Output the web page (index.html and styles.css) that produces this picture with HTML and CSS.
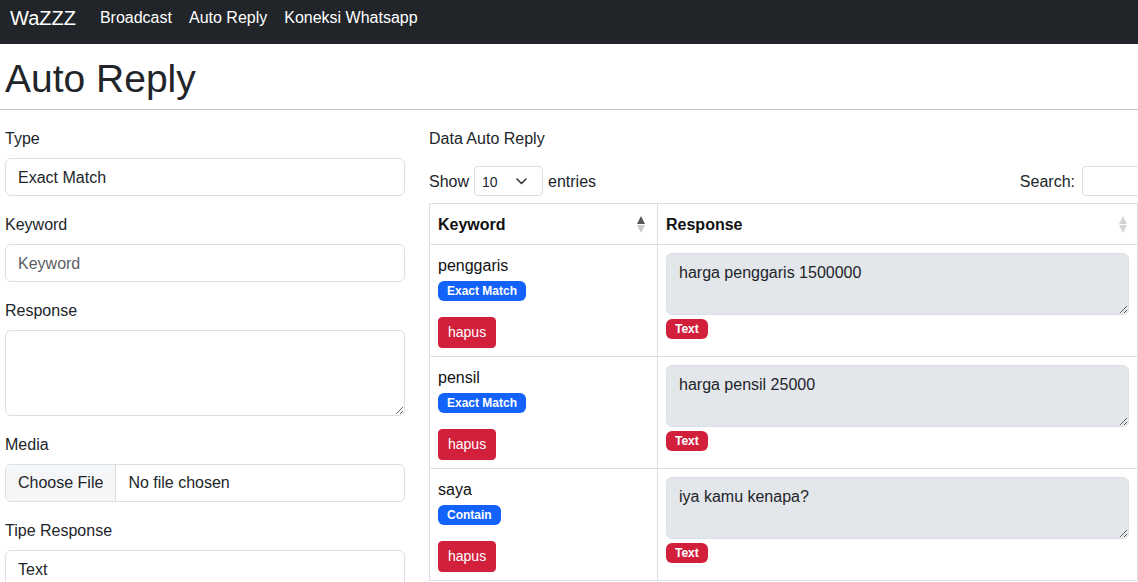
FILE: index.html
```html
<!DOCTYPE html>
<html lang="id">
<head>
<meta charset="utf-8">
<title>Auto Reply - WaZZZ</title>
<link rel="stylesheet" href="styles.css">
</head>
<body>
<nav class="navbar">
  <a class="brand" href="#">WaZZZ</a>
  <ul class="nav">
    <li><a class="nav-link" href="#">Broadcast</a></li>
    <li><a class="nav-link" href="#">Auto Reply</a></li>
    <li><a class="nav-link" href="#">Koneksi Whatsapp</a></li>
  </ul>
</nav>

<h1 class="page-title">Auto Reply</h1>
<hr class="divider">

<main class="content">
  <form class="form-col">
    <div class="field">
      <label class="label" for="type">Type</label>
      <select class="control" id="type"><option>Exact Match</option><option>Contain</option></select>
    </div>
    <div class="field">
      <label class="label" for="keyword">Keyword</label>
      <input class="control" id="keyword" type="text" placeholder="Keyword">
    </div>
    <div class="field">
      <label class="label" for="response">Response</label>
      <textarea class="control area" id="response" rows="3"></textarea>
    </div>
    <div class="field">
      <label class="label" for="media">Media</label>
      <input class="control file" id="media" type="file">
    </div>
    <div class="field">
      <label class="label" for="tipe">Tipe Response</label>
      <select class="control" id="tipe"><option>Text</option><option>Image</option></select>
    </div>
    <button class="btn-primary" type="button">Simpan</button>
  </form>

  <section class="data-col">
    <div class="data-wrap">
      <div class="label data-title">Data Auto Reply</div>
      <div class="dt-top">
        <div class="dt-length">
          <span>Show</span>
          <div class="mini-select"><span>10</span>
            <svg width="11" height="7" viewBox="0 0 11 7"><path d="M1 1l4.5 4.5L10 1" fill="none" stroke="#343a40" stroke-width="1.6" stroke-linecap="round" stroke-linejoin="round"/></svg>
          </div>
          <span>entries</span>
        </div>
        <div class="dt-filter">
          <span>Search:</span>
          <input class="mini-input" type="search">
        </div>
      </div>

      <table class="data-table">
        <colgroup><col class="c-key"><col class="c-resp"><col class="c-media"></colgroup>
        <thead>
          <tr>
            <th><div class="th-inner"><span>Keyword</span>
              <svg class="sort" width="8" height="17" viewBox="0 0 8 17"><polygon points="4,0 8,8 0,8" fill="#575757"/><polygon points="0,9 8,9 4,17" fill="#c9c9c9"/></svg></div></th>
            <th><div class="th-inner"><span>Response</span>
              <svg class="sort sort-r" width="8" height="17" viewBox="0 0 8 17"><polygon points="4,0 8,8 0,8" fill="#d4d4d4"/><polygon points="0,9 8,9 4,17" fill="#d4d4d4"/></svg></div></th>
            <th></th>
          </tr>
        </thead>
        <tbody>
          <tr>
            <td><div class="key-cell"><span>penggaris</span><span class="badge blue">Exact Match</span><button class="btn-danger" type="button">hapus</button></div></td>
            <td><textarea class="resp-area" rows="2" readonly>harga penggaris 1500000</textarea><span class="badge red">Text</span></td>
            <td></td>
          </tr>
          <tr>
            <td><div class="key-cell"><span>pensil</span><span class="badge blue">Exact Match</span><button class="btn-danger" type="button">hapus</button></div></td>
            <td><textarea class="resp-area" rows="2" readonly>harga pensil 25000</textarea><span class="badge red">Text</span></td>
            <td></td>
          </tr>
          <tr>
            <td><div class="key-cell"><span>saya</span><span class="badge blue">Contain</span><button class="btn-danger" type="button">hapus</button></div></td>
            <td><textarea class="resp-area" rows="2" readonly>iya kamu kenapa?</textarea><span class="badge red">Text</span></td>
            <td></td>
          </tr>
        </tbody>
      </table>
    </div>
  </section>
</main>
</body>
</html>
```

FILE: styles.css
```css
html {
  scrollbar-width: none;
}

* {
  box-sizing: border-box;
}

body {
  margin: 0;
  font-family: "Liberation Sans", Arial, Helvetica, sans-serif;
  font-size: 16px;
  line-height: 24px;
  color: #212529;
  background: #fff;
}

/* navbar */
.navbar {
  height: 44px;
  background: #212529;
  display: flex;
  align-items: center;
  padding: 1px 0 9px 10px;
}

.brand {
  color: #fff;
  text-decoration: none;
  font-size: 20px;
  line-height: 30px;
  margin-right: 15px;
}

.nav {
  list-style: none;
  margin: 0;
  padding: 0;
  display: flex;
}

.nav-link {
  display: block;
  padding: 0 8px 0 9px;
  color: #fff;
  text-decoration: none;
  font-size: 16px;
  line-height: 24px;
}

/* heading */
.page-title {
  margin: 10px 0 7px;
  padding: 1px 0 0 5px;
  height: 48px;
  font-size: 39px;
  line-height: 48px;
  font-weight: 500;
  color: #212529;
}

.divider {
  margin: 0 0 16px;
  border: 0;
  border-top: 1px solid #c3c4c6;
}

/* main layout */
.content {
  display: flex;
  gap: 24px;
  padding-left: 5px;
  align-items: flex-start;
}

.form-col {
  width: 400px;
  flex: none;
}

.field {
  margin-bottom: 16px;
}

.label {
  display: block;
  margin-bottom: 8px;
  padding-top: 1px;
  height: 24px;
  line-height: 24px;
}

.control {
  display: block;
  width: 100%;
  height: 38px;
  padding: 7px 12px 5px;
  font-family: inherit;
  font-size: 16px;
  line-height: 24px;
  color: #212529;
  background: #fff;
  border: 1px solid #dbdfe4;
  border-radius: 6px;
  appearance: none;
  -webkit-appearance: none;
  outline: none;
}

.control::placeholder {
  color: #5c6064;
}

.area {
  height: 86px;
  resize: vertical;
}

.file {
  overflow: hidden;
  padding: 6px 12px;
}

.file::file-selector-button {
  font-family: inherit;
  font-size: 16px;
  line-height: 24px;
  color: #212529;
  padding: 6px 12px;
  margin: -6px 12px -6px -12px;
  border: 0;
  border-right: 1px solid #dbdfe4;
  border-radius: 0;
  background: #f5f6f8;
}

.btn-primary {
  font-family: inherit;
  font-size: 16px;
  line-height: 24px;
  padding: 6px 12px;
  color: #fff;
  background: #1262fb;
  border: 1px solid #1262fb;
  border-radius: 6px;
}

/* data column */
.data-col {
  flex: 1;
  min-width: 0;
  overflow: hidden;
}

.data-wrap {
  width: 823px;
}

.data-title {
  margin-bottom: 16px;
}

.dt-top {
  display: flex;
  justify-content: space-between;
  align-items: center;
  height: 30px;
  padding-top: 1px;
}

.dt-length,
.dt-filter {
  display: flex;
  align-items: center;
}

.dt-length {
  gap: 5px;
}

.dt-filter {
  gap: 7px;
}

.mini-select {
  width: 69px;
  height: 30px;
  margin-top: -1px;
  display: flex;
  align-items: center;
  justify-content: space-between;
  padding: 1px 15px 0 7px;
  border: 1px solid #dbdfe4;
  border-radius: 4px;
  font-size: 14px;
}

.mini-input {
  width: 170px;
  height: 30px;
  margin-top: -1px;
  border: 1px solid #dbdfe4;
  border-radius: 4px;
  font-family: inherit;
  font-size: 14px;
  padding: 4px 8px;
  outline: none;
}

/* table */
.data-table {
  width: 100%;
  margin-top: 7px;
  border-collapse: collapse;
  table-layout: fixed;
}

.c-key {
  width: 228px;
}

.c-resp {
  width: 480px;
}

.data-table th,
.data-table td {
  border: 1px solid #dbdfe4;
  padding: 8px;
  text-align: left;
  vertical-align: top;
  color: #212529;
}

.data-table th {
  font-weight: 700;
  color: #111;
  padding: 9px 8px 7px;
}

.th-inner {
  display: flex;
  justify-content: space-between;
  align-items: center;
  height: 24px;
}

.sort {
  margin-right: 4px;
  margin-top: -2px;
  flex: none;
}

.sort-r {
  margin-right: 2px;
}

.key-cell {
  display: flex;
  flex-direction: column;
  align-items: flex-start;
  color: #111;
  padding-top: 1px;
}

.key-cell > span:first-child {
  height: 23px;
}

.badge {
  display: inline-block;
  font-size: 12px;
  font-weight: 700;
  line-height: 12px;
  padding: 4px 9px;
  border-radius: 6px;
  color: #fff;
}

.key-cell .badge {
  margin-top: 4px;
}

.blue {
  background: #1262fb;
}

.red {
  background: #d21f3c;
  margin-top: 4px;
}

.btn-danger {
  margin-top: 16px;
  height: 31px;
  padding: 4px 9px;
  font-family: inherit;
  font-size: 14px;
  line-height: 21px;
  color: #fff;
  background: #d21f3c;
  border: 1px solid #d21f3c;
  border-radius: 4px;
}

.resp-area {
  display: block;
  width: 100%;
  height: 62px;
  padding: 7px 12px 5px;
  font-family: inherit;
  font-size: 16px;
  line-height: 24px;
  color: #212529;
  background: #e3e6ea;
  border: 1px solid #dbdfe4;
  border-radius: 6px;
  resize: vertical;
  outline: none;
}
```
